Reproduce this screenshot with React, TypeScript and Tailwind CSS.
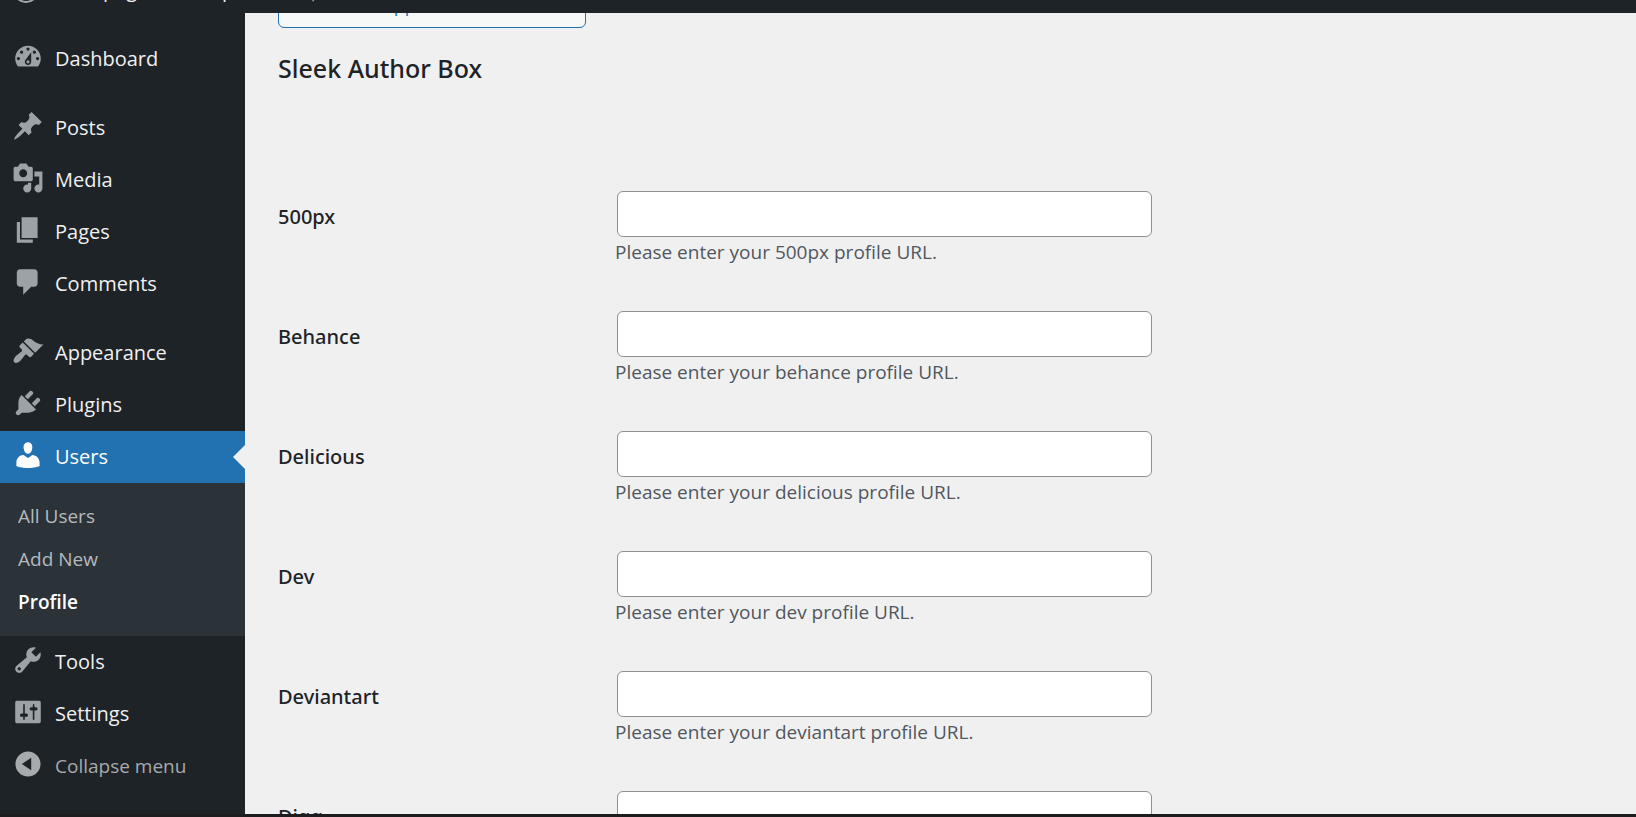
import React from "react";

type MenuEntry = { label: string; icon: string; active?: boolean; children?: string[] };

const icons = {
  dashboard:
    "M3.76 16h12.48c1.1-1.37 1.76-3.11 1.76-5 0-4.42-3.58-8-8-8s-8 3.58-8 8c0 1.89.66 3.63 1.76 5zM10 4c.55 0 1 .45 1 1s-.45 1-1 1-1-.45-1-1 .45-1 1-1zM6 6c.55 0 1 .45 1 1s-.45 1-1 1-1-.45-1-1 .45-1 1-1zm8 0c.55 0 1 .45 1 1s-.45 1-1 1-1-.45-1-1 .45-1 1-1zm-5.37 5.55L12 7v6c0 1.1-.9 2-2 2s-2-.9-2-2c0-.57.24-1.08.63-1.45zM4 10c.55 0 1 .45 1 1s-.45 1-1 1-1-.45-1-1 .45-1 1-1zm12 0c.55 0 1 .45 1 1s-.45 1-1 1-1-.45-1-1 .45-1 1-1zm-5 3c0-.55-.45-1-1-1s-1 .45-1 1 .45 1 1 1 1-.45 1-1z",
  posts:
    "M10.44 3.02l1.82-1.82 6.36 6.35-1.83 1.82c-1.05-.68-2.48-.57-3.41.36l-.75.75c-.92.93-1.04 2.35-.35 3.41l-1.83 1.82-2.41-2.41-2.8 2.79c-.42.42-3.38 2.71-3.8 2.29s1.86-3.39 2.28-3.81l2.79-2.79L4.1 9.36l1.83-1.82c1.05.69 2.48.57 3.4-.36l.75-.75c.93-.92 1.05-2.35.36-3.41z",
  media:
    "M13 11V4c0-.55-.45-1-1-1h-1.67L9 1H5L3.67 3H2c-.55 0-1 .45-1 1v7c0 .55.45 1 1 1h10c.55 0 1-.45 1-1zM7 4.5c1.38 0 2.5 1.12 2.5 2.5S8.38 9.5 7 9.5 4.5 8.38 4.5 7 5.62 4.5 7 4.5zM14 6h5v10.5c0 1.38-1.12 2.5-2.5 2.5S14 17.88 14 16.5s1.12-2.5 2.5-2.5c.17 0 .34.02.5.05V9h-3V6zm-4 8.05V13h2v3.5c0 1.38-1.12 2.5-2.5 2.5S7 17.88 7 16.5 8.12 14 9.5 14c.17 0 .34.02.5.05z",
  pages: "M6 15V2h10v13H6zm-1 1h8v2H3V5h2v11z",
  comments:
    "M5 2h9c1.1 0 2 .9 2 2v7c0 1.1-.9 2-2 2h-2l-5 5v-5H5c-1.1 0-2-.9-2-2V4c0-1.1.9-2 2-2z",
  appearance:
    "M14.48 11.06L7.41 3.99l1.5-1.5c.5-.56 2.3-.47 3.51.32 1.21.8 1.43 1.28 2.91 2.1 1.18.64 2.45 1.26 4.45.85zm-.71.71L6.7 4.7 4.93 6.47c-.39.39-.39 1.02 0 1.41l1.06 1.06c.39.39.39 1.03 0 1.42-.6.6-1.43 1.11-2.21 1.69-.35.26-.7.53-1.01.84C1.43 14.23.4 16.08 1.4 17.07c.99 1 2.84-.03 4.18-1.36.31-.31.58-.66.85-1.02.57-.78 1.08-1.61 1.69-2.21.39-.39 1.02-.39 1.41 0l1.06 1.06c.39.39 1.02.39 1.41 0z",
  plugins:
    "M13.11 4.36L9.87 7.6 8 5.73l3.24-3.24c.35-.34 1.05-.2 1.56.32.52.51.66 1.21.31 1.55zm-8 1.77l.91-1.12 9.01 9.01-1.19.84c-.71.71-2.63 1.16-3.82 1.16H6.14L4.9 17.26c-.59.59-1.54.59-2.12 0-.59-.58-.59-1.53 0-2.12l1.24-1.24v-3.88c0-1.13.4-3.19 1.09-3.89zm7.26 3.97l3.24-3.24c.34-.35 1.04-.21 1.55.31.52.51.66 1.21.31 1.55l-3.24 3.25z",
  users:
    "M10 9.25c-2.27 0-2.73-3.44-2.73-3.44C7 4.02 7.82 2 9.97 2c2.16 0 2.98 2.02 2.71 3.81 0 0-.41 3.44-2.68 3.44zm0 2.57L12.72 10c2.39 0 4.52 2.33 4.52 4.53v2.49s-3.65 1.13-7.24 1.13c-3.65 0-7.24-1.13-7.24-1.13v-2.49c0-2.25 1.94-4.48 4.47-4.48z",
  tools:
    "M16.68 9.77c-1.34 1.34-3.3 1.67-4.95.99l-5.41 6.52c-.99.99-2.59.99-3.58 0s-.99-2.59 0-3.57l6.52-5.42c-.68-1.65-.35-3.61.99-4.95 1.28-1.28 3.12-1.62 4.72-1.06l-2.89 2.89 2.82 2.82 2.86-2.87c.53 1.58.18 3.39-1.08 4.65zM3.81 16.21c.4.39 1.04.39 1.43 0 .4-.4.4-1.04 0-1.43-.39-.4-1.03-.4-1.43 0-.39.39-.39 1.03 0 1.43z",
  settings:
    "M18 16V4c0-.55-.45-1-1-1H3c-.55 0-1 .45-1 1v12c0 .55.45 1 1 1h14c.55 0 1-.45 1-1zM8 11h1c.55 0 1 .45 1 1s-.45 1-1 1H8v1.5c0 .28-.22.5-.5.5s-.5-.22-.5-.5V13H6c-.55 0-1-.45-1-1s.45-1 1-1h1V5.5c0-.28.22-.5.5-.5s.5.22.5.5V11zm5-2h-1c-.55 0-1-.45-1-1s.45-1 1-1h1V5.5c0-.28.22-.5.5-.5s.5.22.5.5V7h1c.55 0 1 .45 1 1s-.45 1-1 1h-1v5.5c0 .28-.22.5-.5.5s-.5-.22-.5-.5V9z",
  collapse:
    "M10 2.16c4.33 0 7.84 3.51 7.84 7.84s-3.51 7.84-7.84 7.84S2.16 14.33 2.16 10 5.71 2.16 10 2.16zm2 11.72V6.12L6.18 9.97z",
};

const menuGroups: MenuEntry[][] = [
  [{ label: "Dashboard", icon: icons.dashboard }],
  [
    { label: "Posts", icon: icons.posts },
    { label: "Media", icon: icons.media },
    { label: "Pages", icon: icons.pages },
    { label: "Comments", icon: icons.comments },
  ],
  [
    { label: "Appearance", icon: icons.appearance },
    { label: "Plugins", icon: icons.plugins },
    { label: "Users", icon: icons.users, active: true, children: ["All Users", "Add New", "Profile"] },
    { label: "Tools", icon: icons.tools },
    { label: "Settings", icon: icons.settings },
  ],
];

const networks = ["500px", "Behance", "Delicious", "Dev", "Deviantart", "Digg"];

function MenuIcon({ path }: { path: string }) {
  return (
    <svg viewBox="0 0 20 20" className="mb-1 size-8 shrink-0" fill="currentColor" fillRule="evenodd" aria-hidden="true">
      <path d={path} />
    </svg>
  );
}

function MenuItem({ entry }: { entry: MenuEntry }) {
  return (
    <li>
      <a
        href="#"
        className={
          entry.active
            ? "relative flex h-[52px] items-center gap-[11px] bg-[#2271b1] pl-3 text-white"
            : "flex h-[52px] items-center gap-[11px] pl-3 text-[#9ca2a7]"
        }
      >
        <MenuIcon path={entry.icon} />
        <span className={entry.active ? "text-white" : "text-[#f0f0f1]"}>{entry.label}</span>
        {entry.active && (
          <svg viewBox="0 0 12 24" className="absolute top-1/2 right-0 h-6 w-3 -translate-y-1/2" aria-hidden="true">
            <path d="M12 0v24L0 12z" fill="#f0f0f1" />
          </svg>
        )}
      </a>
      {entry.children && (
        <ul className="bg-[#2c3338] py-3 text-[19px]">
          {entry.children.map((child) => (
            <li key={child}>
              <a
                href="#"
                className={
                  child === "Profile"
                    ? "flex h-[43px] items-center pl-[18px] font-semibold text-white"
                    : "flex h-[43px] items-center pl-[18px] text-[#b4b9be]"
                }
              >
                {child}
              </a>
            </li>
          ))}
        </ul>
      )}
    </li>
  );
}

function ProfileField({ name }: { name: string }) {
  const id = name.toLowerCase();
  return (
    <div className="flex h-[120px] shrink-0">
      <label htmlFor={id} className="w-[339px] shrink-0 pt-3 font-['Noto_Sans',sans-serif] text-[20px] leading-7 font-medium">
        {name}
      </label>
      <div className="-ml-0.5 min-w-0">
        <input
          id={id}
          type="url"
          className="ml-0.5 block h-[46px] w-[535px] max-w-full rounded-md border border-[#8c8f94] bg-white px-3 outline-none"
        />
        <p className="pt-px text-[19px] leading-7 text-[#50575e]">Please enter your {id} profile URL.</p>
      </div>
    </div>
  );
}

export default function App() {
  return (
    <div className="flex h-screen flex-col overflow-hidden border-b-[3px] border-[#1d1d20] bg-[#f0f0f1] font-['Open_Sans','Noto_Sans',sans-serif] text-[20px] text-[#1d2327]">
      <header className="h-[13px] shrink-0 overflow-hidden bg-[#1d2327]">
        <div className="-mt-6 flex h-7 items-center text-[#f0f0f1]">
          <svg viewBox="0 0 26 26" className="ml-[13px] size-[26px]" fill="none" stroke="#a7aaad" strokeWidth="2" aria-hidden="true">
            <circle cx="13" cy="13" r="12" />
          </svg>
          <span className="ml-16 w-[119px]">page</span>
          <span className="w-20">p</span>
          <svg viewBox="0 0 20 20" className="size-[30px] text-[#a7aaad]" fill="currentColor" aria-hidden="true">
            <path d={icons.comments} />
          </svg>
        </div>
      </header>
      <div className="flex min-h-0 flex-1">
        <nav aria-label="Main menu" className="flex w-[245px] shrink-0 flex-col bg-[#1d2327] pt-5">
          <div className="flex flex-col gap-[17px]">
            {menuGroups.map((group) => (
              <ul key={group[0].label}>
                {group.map((entry) => (
                  <MenuItem key={entry.label} entry={entry} />
                ))}
              </ul>
            ))}
          </div>
          <button type="button" className="flex h-[52px] items-center gap-[11px] pl-3 text-[19px] text-[#a7aaad]">
            <MenuIcon path={icons.collapse} />
            Collapse menu
          </button>
        </nav>
        <main className="flex min-w-0 flex-1 flex-col overflow-hidden px-[33px]">
          <div className="flex h-[15px] shrink-0 items-end overflow-hidden">
            <button
              type="button"
              className="h-[45px] w-[308px] shrink-0 rounded-md border border-[#2271b1] bg-[#f6f7f7] text-[18px] text-[#2271b1]"
            >
              Add New Application Password
            </button>
          </div>
          <h2 className="mt-6 mb-[107px] font-['Noto_Sans',sans-serif] text-[25px] leading-8 font-medium">Sleek Author Box</h2>
          <form className="flex flex-col">
            {networks.map((name) => (
              <ProfileField key={name} name={name} />
            ))}
          </form>
        </main>
      </div>
    </div>
  );
}
